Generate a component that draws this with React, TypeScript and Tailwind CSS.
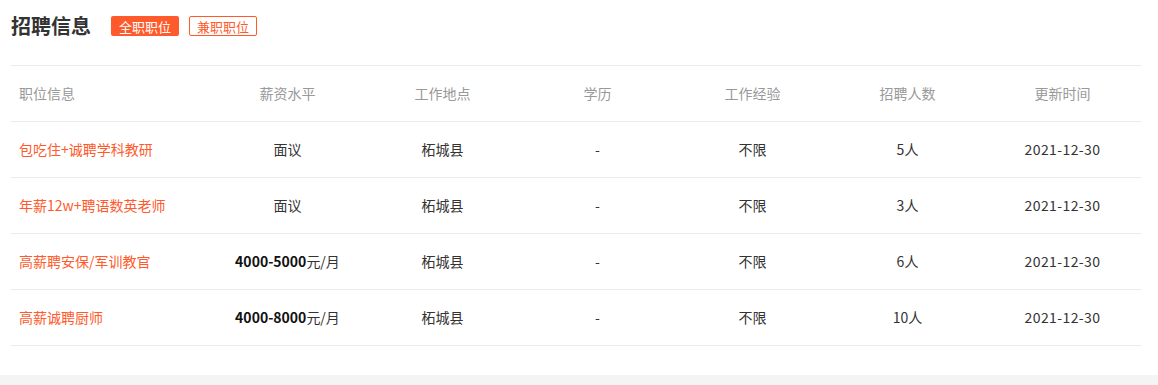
import React from 'react'

const ORANGE = 'text-[#ff5a2b]'

const JOBS = [
  { title: '包吃住+诚聘学科教研', salary: null, place: '柘城县', edu: '-', exp: '不限', count: '5人', date: '2021-12-30' },
  { title: '年薪12w+聘语数英老师', salary: null, place: '柘城县', edu: '-', exp: '不限', count: '3人', date: '2021-12-30' },
  { title: '高薪聘安保/军训教官', salary: '4000-5000', place: '柘城县', edu: '-', exp: '不限', count: '6人', date: '2021-12-30' },
  { title: '高薪诚聘厨师', salary: '4000-8000', place: '柘城县', edu: '-', exp: '不限', count: '10人', date: '2021-12-30' },
]

const HEADERS = ['薪资水平', '工作地点', '学历', '工作经验', '招聘人数', '更新时间']

const GRID = 'grid grid-cols-[199px_repeat(6,155px)] items-center h-[56px] border-b border-[#ebebeb]'

export default function App() {
  return (
    <div className="w-[1158px] h-[385px] bg-[#f4f4f4] font-['Noto_Sans_CJK_SC','Microsoft_YaHei',sans-serif]">
      <div className="bg-white h-[375px] px-[11px] pt-[10px]">
        {/* Title + tabs */}
        <div className="flex items-center h-[32px]">
          <h2 className="text-[20px] font-bold text-[#333] leading-none">招聘信息</h2>
          <button className="ml-[20px] w-[68px] h-[20px] rounded-[2px] bg-[#ff5a2b] text-white text-[13px] leading-none">
            全职职位
          </button>
          <button className={`ml-[10px] w-[68px] h-[20px] rounded-[2px] border border-[#ff5a2b] ${ORANGE} text-[13px] leading-none`}>
            兼职职位
          </button>
        </div>

        {/* Table */}
        <div className="mt-[23px] w-[1130px] border-t border-[#ebebeb] text-[14px]">
          <div className={`${GRID} text-[#999]`}>
            <div className="pl-[8px]">职位信息</div>
            {HEADERS.map(h => (
              <div key={h} className="text-center">{h}</div>
            ))}
          </div>
          {JOBS.map(job => (
            <div key={job.title} className={`${GRID} text-[#333]`}>
              <div className={`pl-[8px] ${ORANGE}`}>{job.title}</div>
              <div className="text-center">
                {job.salary ? (
                  <>
                    <span className="font-bold text-[#111]">{job.salary}</span>元/月
                  </>
                ) : '面议'}
              </div>
              <div className="text-center">{job.place}</div>
              <div className="text-center">{job.edu}</div>
              <div className="text-center">{job.exp}</div>
              <div className="text-center">{job.count}</div>
              <div className="text-center tracking-[0.4px]">{job.date}</div>
            </div>
          ))}
        </div>
      </div>
    </div>
  )
}
